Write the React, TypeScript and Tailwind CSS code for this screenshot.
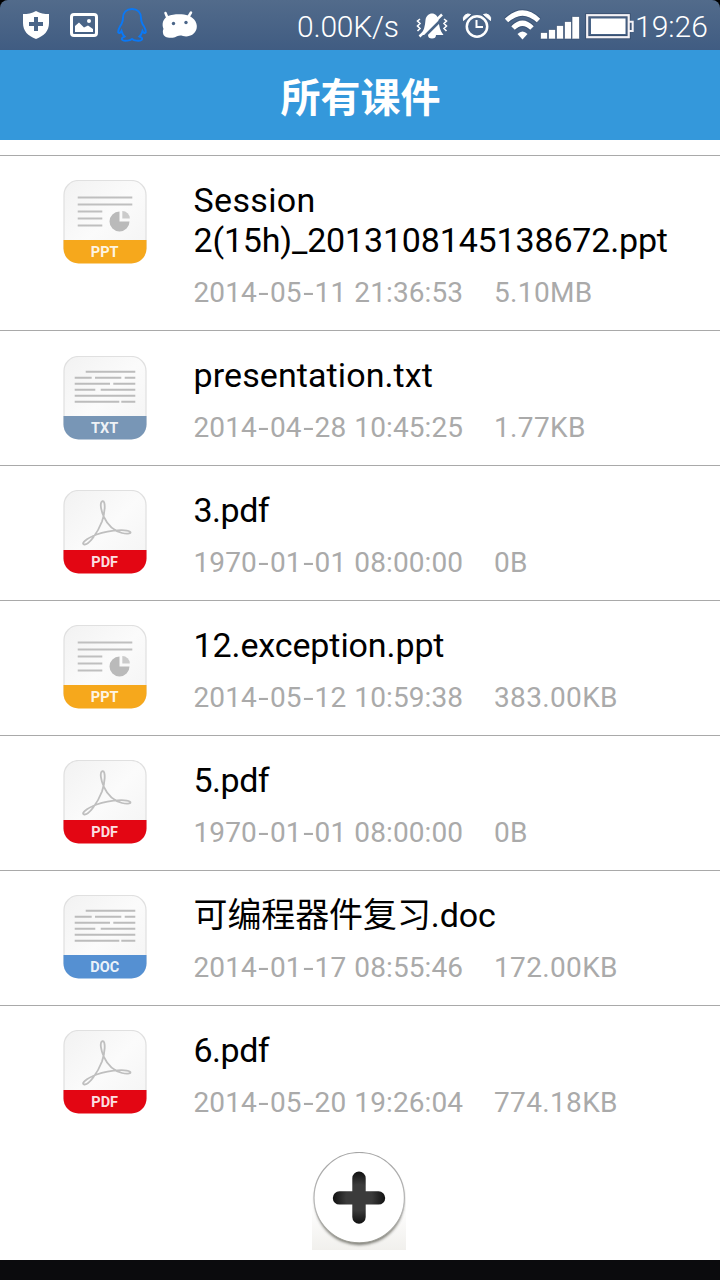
import { Fragment } from 'react';
import type { ReactNode } from 'react';

type FileType = 'ppt' | 'txt' | 'pdf' | 'doc';

interface CourseFile {
  name: string;
  type: FileType;
  date: string;
  size: string;
}

const files: CourseFile[] = [
  { name: 'Session 2(15h)_2013108145138672.ppt', type: 'ppt', date: '2014-05-11 21:36:53', size: '5.10MB' },
  { name: 'presentation.txt', type: 'txt', date: '2014-04-28 10:45:25', size: '1.77KB' },
  { name: '3.pdf', type: 'pdf', date: '1970-01-01 08:00:00', size: '0B' },
  { name: '12.exception.ppt', type: 'ppt', date: '2014-05-12 10:59:38', size: '383.00KB' },
  { name: '5.pdf', type: 'pdf', date: '1970-01-01 08:00:00', size: '0B' },
  { name: '可编程器件复习.doc', type: 'doc', date: '2014-01-17 08:55:46', size: '172.00KB' },
  { name: '6.pdf', type: 'pdf', date: '2014-05-20 19:26:04', size: '774.18KB' },
];

const bandColors: Record<FileType, string> = {
  ppt: '#f6a81c',
  txt: '#7896b6',
  pdf: '#e30613',
  doc: '#5590d2',
};

const textLines = (
  <path
    d="M22.7 15.7H72.3M11.7 21.7H28.7M32 21.7H58.3M61.7 21.7H72.3M11.7 27.7H47M50.3 27.7H72.3M11.7 33.7H32.3M37.7 33.7H72.3M11.7 39.7H72.3M11.7 45.7H56.3M58.3 45.7H72.3"
    stroke="#bcbcbc"
    strokeWidth="1.9"
  />
);

const artwork: Record<FileType, ReactNode> = {
  ppt: (
    <>
      <path d="M14.7 17.5H69.3M14.7 24.5H69.3M14.7 31.5H39.3M14.7 38.5H39.3M14.7 45.5H39.3" stroke="#bfbfbf" strokeWidth="1.9" />
      <path d="M56.5 41.5V31.5A10 10 0 1 0 66.5 41.5Z" fill="#bababa" />
      <path d="M59.3 38.5V31A7.5 7.5 0 0 1 66.8 38.5Z" fill="#cbcbcb" />
    </>
  ),
  txt: textLines,
  doc: textLines,
  pdf: (
    <path
      d="M39.5 11.2C36.3 12.5 38 20.5 41 27.2C45.5 37 51 41 59 43C65 44.5 69 43.2 67 41.8C62 38.5 41 40.5 29 46.5C20.5 50.5 18.5 54 21.2 54.5C26 55 34.5 43 39 31.5C42 23 43 10.5 39.5 11.2Z"
      fill="none"
      stroke="#bfbfbf"
      strokeWidth="1.8"
    />
  ),
};

function FileIcon({ type }: { type: FileType }) {
  return (
    <svg width="84" height="84" viewBox="0 0 84 84" className="shrink-0">
      <defs>
        <linearGradient id={`paper-${type}`} x1="0" y1="0" x2="1" y2="1">
          <stop offset="0" stopColor="#f2f2f2" />
          <stop offset="0.5" stopColor="#fbfbfb" />
          <stop offset="1" stopColor="#f3f3f3" />
        </linearGradient>
        <clipPath id={`clip-${type}`}>
          <rect x="0.5" y="0" width="83" height="83.5" rx="15" />
        </clipPath>
      </defs>
      <rect x="1" y="0.5" width="82" height="82" rx="14.5" fill={`url(#paper-${type})`} stroke="#e0e0e0" strokeWidth="1.2" />
      {artwork[type]}
      <rect y="60" width="84" height="24" fill={bandColors[type]} clipPath={`url(#clip-${type})`} />
      <text x="41.7" y="76.6" textAnchor="middle" fill="#fff" fillOpacity="0.9" fontSize="14.5" fontWeight="700" fontFamily="Roboto, sans-serif">
        {type.toUpperCase()}
      </text>
    </svg>
  );
}

function FileName({ name }: { name: string }) {
  const words = name.split(' ');
  return (
    <p className="text-[34px] leading-10 text-black">
      {words.map((word, i) => {
        // 数字多或很短的文件名收紧字距
        const tracking = /\d{4,}/.test(word)
          ? 'tracking-[-0.17px]'
          : /^\d\./.test(word)
            ? 'tracking-[-0.5px]'
            : /^[A-Z]/.test(word)
              ? 'tracking-[0.35px]'
              : /^[a-z]/.test(word)
                ? 'tracking-[0.1px]'
                : 'tracking-[-0.1px]';
        return (
          <Fragment key={word}>
            {i > 0 && ' '}
            <span className={tracking}>{word}</span>
          </Fragment>
        );
      })}
    </p>
  );
}

function FileDate({ value }: { value: string }) {
  const [date, time] = value.split(' ');
  return (
    <span className="w-[300.500px] tracking-[0.1px] whitespace-pre">
      {date.split('-').map((part, i) => (
        <Fragment key={i}>
          {i > 0 && <span className="inline-block scale-x-135 px-[2.600px]">-</span>}
          {part}
        </Fragment>
      ))}
      {' '}
      <span className="pl-px">{time}</span>
    </span>
  );
}

function FileRow({ file }: { file: CourseFile }) {
  return (
    <li className="flex border-t border-[#a9a9a9] pl-[63px]">
      <div className={file.type === 'txt' ? 'pt-[25px]' : 'pt-6'}>
        <FileIcon type={file.type} />
      </div>
      <div className="ml-[46.500px] flex-1 pt-6 pr-6 pb-[21px]">
        <FileName name={file.name} />
        <p className="mt-4 flex h-[33px] text-[28px] leading-[33px] text-[#aaa]">
          <FileDate value={file.date} />
          <span className="tracking-[0.35px]">{file.size}</span>
        </p>
      </div>
    </li>
  );
}

function StatusBar() {
  return (
    <div className="bg-black">
      <div className="flex h-[50px] items-center rounded-t-lg bg-gradient-to-b from-[#526b8b] to-[#405c82] text-white">
        {/* 左侧通知 */}
        <svg width="240" height="50" viewBox="0 0 240 50" className="shrink-0">
          <path d="M36 11C32 13.500 27.500 14 23 14V23C23 31 28 36 36 39C44 36 49 31 49 23V14C44.500 14 40 13.500 36 11Z" fill="#fff" />
          <path d="M36 17V31M29 24H43" stroke="#4a6588" strokeWidth="4" />
          <rect x="71.500" y="14.500" width="25" height="21" rx="2.500" fill="none" stroke="#fff" strokeWidth="3" />
          <path d="M75 32V26L79 22.500L84 27.500L88 25.500L93 29V32Z" fill="#fff" />
          <circle cx="89" cy="21" r="2" fill="#fff" />
          <path
            d="M132 9C126.500 9 123 12.500 123 18C123 20 122.500 22 121.500 24C119.500 27 118 30 118.300 32.500C119.500 34 121 32 121.500 31C122 33 123 35 124.500 36.500C122 37.500 121 39 122.500 40C125 41.500 130 40.500 132 39C134 40.500 139 41.500 141.500 40C143 39 142 37.500 139.500 36.500C141 35 142 33 142.500 31C143 32 144.500 34 145.700 32.500C146 30 144.500 27 142.500 24C141.500 22 141 20 141 18C141 12.500 137.500 9 132 9Z"
            fill="none"
            stroke="#0a78f5"
            strokeWidth="2"
          />
          <path d="M167.500 18L165.500 13M188 17.500L191 12.500" stroke="#fff" strokeWidth="2.500" strokeLinecap="round" />
          <path
            d="M168 16C173 13.800 183 13.500 188 15.500C195 18 198 24 196.500 29C195 34.500 189 37.500 183 36C179 35 178 36 175 37.300C170 38.500 163.500 38 163 33C162.700 31 163 30 163.500 29C161.500 24 163 18.500 168 16Z"
            fill="#fff"
          />
          <circle cx="173.500" cy="23.500" r="1.700" fill="#4a6588" />
          <circle cx="186" cy="22.500" r="1.700" fill="#4a6588" />
        </svg>

        <span className="ml-[57px] w-[118px] shrink-0 pt-[3px] text-[30px] leading-[47px] font-light tracking-[-0.2px]">0.00K/s</span>

        {/* 静音、闹钟、信号、电量 */}
        <svg width="220" height="50" viewBox="415 0 220 50" className="shrink-0">
          <path d="M432 13.500C435 13.500 438 16 438.500 20C439 26 440 31 443.500 35H420.500C424 31 425 26 425.500 20C426 16 429 13.500 432 13.500Z" fill="#fff" />
          <path d="M428 35A4 3.500 0 0 0 436 35Z" fill="#fff" />
          <path d="M422 39L447 14" stroke="#4a6588" strokeWidth="2.500" />
          <path d="M419.500 36.500L442 14.500" stroke="#fff" strokeWidth="2.500" />
          <path d="M420 19L417.500 21L420 23.500L417.500 26L420 28.500L417.500 31M444 19L446.500 21L444 23.500L446.500 26L444 28.500L446.500 31" fill="none" stroke="#fff" strokeWidth="1.600" />

          <circle cx="477" cy="26.500" r="10.200" fill="none" stroke="#fff" strokeWidth="2.500" />
          <path d="M476.500 20V27H483" fill="none" stroke="#fff" strokeWidth="2" />
          <path d="M463.500 20.500A5 5 0 0 1 470.500 14.500ZM490.500 20.500A5 5 0 0 0 483.500 14.500Z" fill="#fff" stroke="#fff" />

          <g fill="none" stroke="#32496a" strokeOpacity="0.6" strokeWidth="7">
            <path d="M506.500 20.500Q522.500 5.500 538.500 20.500M513 28Q522.500 18.500 532 28" />
          </g>
          <g fill="none" stroke="#fff" strokeWidth="5">
            <path d="M506.500 20.500Q522.500 5.500 538.500 20.500M513 28Q522.500 18.500 532 28" />
          </g>
          <path d="M517.500 34Q522.500 29 527.500 34L522.500 39.500Z" fill="#fff" />

          <g fill="#fff" stroke="#32496a" strokeOpacity="0.6">
            <rect x="540.500" y="32.500" width="7" height="6.500" />
            <rect x="548.500" y="29.500" width="7" height="9.500" />
            <rect x="556.500" y="25.500" width="7" height="13.500" />
            <rect x="564.500" y="21.500" width="7" height="17.500" />
            <rect x="572" y="16.500" width="7.500" height="22.500" />
          </g>

          <rect x="587.200" y="15.200" width="41.500" height="22" fill="none" stroke="#30425f" strokeWidth="4" strokeOpacity="0.55" />
          <rect x="587.200" y="15.200" width="41.500" height="22" fill="none" stroke="#f4f2f6" strokeWidth="2.200" />
          <rect x="591" y="18.500" width="34.500" height="15.500" fill="#fff" />
          <path d="M629 21.700H632.700V31H629" fill="none" stroke="#f4f2f6" strokeWidth="2" />
        </svg>
        <span className="pt-[3px] text-[30px] leading-[47px] font-light">19:26</span>
      </div>
    </div>
  );
}

function AddButton() {
  return (
    <button className="block" aria-label="添加课件">
      <svg width="94" height="98" viewBox="312 1152 94 98">
        <defs>
          <linearGradient id="shade" x1="0" y1="0" x2="0" y2="1">
            <stop offset="0.55" stopColor="#fff" />
            <stop offset="1" stopColor="#f1f0ed" />
          </linearGradient>
          <linearGradient id="rim" x1="0" y1="0" x2="0" y2="1">
            <stop offset="0" stopColor="#a5a5a5" />
            <stop offset="0.6" stopColor="#b8b8b8" />
            <stop offset="1" stopColor="#9a9a92" />
          </linearGradient>
          <filter id="soft">
            <feGaussianBlur stdDeviation="1.800" />
          </filter>
          <radialGradient id="cross">
            <stop offset="0.5" stopColor="#3b3b3b" />
            <stop offset="1" stopColor="#111" />
          </radialGradient>
        </defs>
        <rect x="312" y="1152" width="94" height="98" fill="url(#shade)" />
        <circle cx="359.500" cy="1200.500" r="44.500" fill="#66665e" filter="url(#soft)" opacity="0.9" />
        <circle cx="359.200" cy="1197.700" r="45.200" fill="#fff" stroke="url(#rim)" strokeWidth="1.200" />
        <path
          d="M352.300 1178.200a6.700 6.700 0 0 1 13.400 0v13h12.800a6.700 6.700 0 0 1 0 13.400h-12.800v12.400a6.700 6.700 0 0 1-13.400 0v-12.400h-12.800a6.700 6.700 0 0 1 0-13.400h12.800z"
          fill="url(#cross)"
        />
      </svg>
    </button>
  );
}

export default function App() {
  return (
    <div className="flex h-[1280px] w-[720px] flex-col overflow-hidden bg-white font-[Roboto,'Noto_Sans_CJK_SC',sans-serif]">
      <StatusBar />
      <header className="flex h-[90px] items-center justify-center bg-[#3498db] pt-[7px] pl-px">
        <h1 className="text-[40px] leading-none font-bold text-white">所有课件</h1>
      </header>

      <ul className="mt-[15px]">
        {files.map((file) => (
          <FileRow key={`${file.name}-${file.date}`} file={file} />
        ))}
      </ul>

      <div className="mt-3 flex flex-1 items-start justify-center pr-0.5">
        <AddButton />
      </div>
      <div className="h-5 bg-[#0b0b0d]" />
    </div>
  );
}
